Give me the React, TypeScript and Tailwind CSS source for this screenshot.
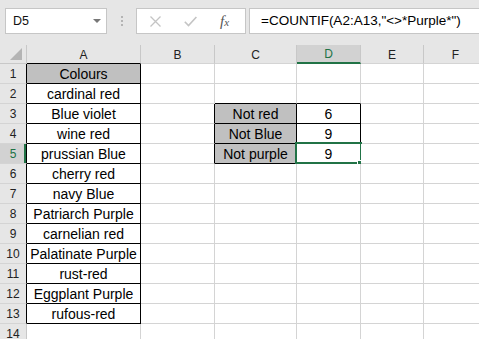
import React from "react";

const W = [27, 114, 74, 82, 64, 63, 64];
const COLS = ["A", "B", "C", "D", "E", "F"];

const colours = [
  "Colours",
  "cardinal red",
  "Blue violet",
  "wine red",
  "prussian Blue",
  "cherry red",
  "navy Blue",
  "Patriarch Purple",
  "carnelian red",
  "Palatinate Purple",
  "rust-red",
  "Eggplant Purple",
  "rufous-red",
];

type CellSpec = {
  text?: string;
  gray?: boolean;
  blackR?: boolean;
  blackB?: boolean;
  selected?: boolean;
};

function getCell(r: number, c: number): CellSpec {
  const s: CellSpec = {};
  if (c === 0 && r >= 1 && r <= 13) {
    s.text = colours[r - 1];
    s.blackR = true;
    s.blackB = true;
    if (r === 1) s.gray = true;
  }
  if (c === 1 && r >= 3 && r <= 5) s.blackR = true;
  if ((c === 2 || c === 3) && r === 2) s.blackB = true;
  if (c === 2 && r >= 3 && r <= 5) {
    s.text = ["Not red", "Not Blue", "Not purple"][r - 3];
    s.gray = true;
    s.blackR = true;
    s.blackB = true;
  }
  if (c === 3 && r >= 3 && r <= 5) {
    s.text = ["6", "9", "9"][r - 3];
    s.blackR = true;
    s.blackB = true;
    if (r === 5) s.selected = true;
  }
  return s;
}

function Cell({ r, c }: { r: number; c: number }) {
  const s = getCell(r, c);
  return (
    <div
      className={`relative flex h-[20px] shrink-0 items-center justify-center border-r border-b pt-[1px] text-[14px] leading-none text-black ${
        s.blackR ? "border-r-black" : "border-r-[#d4d4d4]"
      } ${s.blackB ? "border-b-black" : "border-b-[#d4d4d4]"} ${
        s.gray ? "bg-[#c0c0c0]" : "bg-white"
      }`}
      style={{ width: W[c + 1] }}
    >
      <span className="whitespace-nowrap">{s.text ?? ""}</span>
      {s.selected && (
        <>
          <div className="pointer-events-none absolute left-[-2px] top-[-2px] h-[22px] w-[67px] border-2 border-[#217346]" />
          <div className="absolute left-[60px] top-[16px] h-[7px] w-[7px] border border-white bg-[#217346]" />
        </>
      )}
    </div>
  );
}

function RowHeader({ r }: { r: number }) {
  const sel = r === 5;
  return (
    <div
      className={`relative flex h-[20px] shrink-0 items-center justify-center border-r border-b border-b-[#d4d4d4] pt-[1px] text-[12px] leading-none ${
        r <= 13 ? "border-r-black" : "border-r-[#c8c8c8]"
      } ${sel ? "bg-[#d2d2d2] text-[#217346]" : "bg-[#e6e6e6] text-[#222]"}`}
      style={{ width: W[0] }}
    >
      {r}
      {sel && <div className="absolute right-0 top-0 h-full w-[2px] bg-[#217346]" />}
    </div>
  );
}

export default function App() {
  const rows = Array.from({ length: 14 }, (_, i) => i + 1);
  return (
    <div
      className="h-[339px] w-[479px] overflow-hidden bg-white"
      style={{ fontFamily: '"Liberation Sans", Arial, sans-serif' }}
    >
      {/* Formula bar */}
      <div className="flex h-[45px] items-start bg-[#e6e6e6] pt-[8px]">
        <div className="ml-[5px] flex h-[26px] w-[102px] items-center justify-between border border-[#c6c6c6] bg-white pl-[7px] pr-[5px] text-[12.5px] text-[#111]">
          <span>D5</span>
          <svg width="8" height="5" viewBox="0 0 8 5">
            <path d="M0 0 L8 0 L4 4 Z" fill="#777" />
          </svg>
        </div>
        <div className="ml-[14px] flex h-[26px] flex-col items-center justify-center gap-[2px]">
          <div className="h-[2px] w-[2px] bg-[#b4b4b4]" />
          <div className="h-[2px] w-[2px] bg-[#b4b4b4]" />
          <div className="h-[2px] w-[2px] bg-[#b4b4b4]" />
        </div>
        <div className="ml-[13px] flex h-[26px] w-[110px] items-center border border-[#c6c6c6] bg-white">
          <svg className="ml-[13px]" width="11" height="11" viewBox="0 0 11 11">
            <path d="M0.5 0.5 L10.5 10.5 M10.5 0.5 L0.5 10.5" stroke="#c4c4c4" strokeWidth="1.3" />
          </svg>
          <svg className="ml-[23px]" width="13" height="11" viewBox="0 0 13 11">
            <path d="M0.8 5.8 L4.5 9.6 L12.4 1" stroke="#c4c4c4" strokeWidth="1.6" fill="none" />
          </svg>
          <span
            className="ml-[23px] italic text-[#555]"
            style={{ fontFamily: '"Liberation Serif", "Times New Roman", serif' }}
          >
            <span className="text-[15px]">f</span>
            <span className="text-[11px]">x</span>
          </span>
        </div>
        <div className="ml-[3px] flex h-[26px] flex-1 items-center border border-r-0 border-[#c6c6c6] bg-white pl-[11px] text-[13.5px] text-black">
          <span className="whitespace-nowrap">=COUNTIF(A2:A13,"&lt;&gt;*Purple*")</span>
        </div>
      </div>

      {/* Column headers */}
      <div className="flex h-[19px]">
        <div
          className="relative h-[19px] shrink-0 border-r border-b border-r-[#c8c8c8] border-b-[#c8c8c8] bg-[#e6e6e6]"
          style={{ width: W[0] }}
        >
          <svg className="absolute left-[10px] top-[3px]" width="12" height="12" viewBox="0 0 12 12">
            <path d="M12 0 L12 12 L0 12 Z" fill="#b4b4b4" />
          </svg>
        </div>
        {COLS.map((c, i) => {
          const sel = c === "D";
          return (
            <div
              key={c}
              className={`flex h-[19px] shrink-0 items-center justify-center border-r border-r-[#c8c8c8] pt-[1px] text-[12px] leading-none ${
                sel
                  ? "border-b-2 border-b-[#217346] bg-[#d2d2d2] text-[#217346]"
                  : c === "A"
                  ? "border-b border-b-black bg-[#e6e6e6] text-[#222]"
                  : "border-b border-b-[#d4d4d4] bg-[#e6e6e6] text-[#222]"
              }`}
              style={{ width: W[i + 1] }}
            >
              {c}
            </div>
          );
        })}
      </div>

      {/* Rows */}
      {rows.map((r) => (
        <div key={r} className="flex">
          <RowHeader r={r} />
          {COLS.map((_, c) => (
            <Cell key={c} r={r} c={c} />
          ))}
        </div>
      ))}
    </div>
  );
}
